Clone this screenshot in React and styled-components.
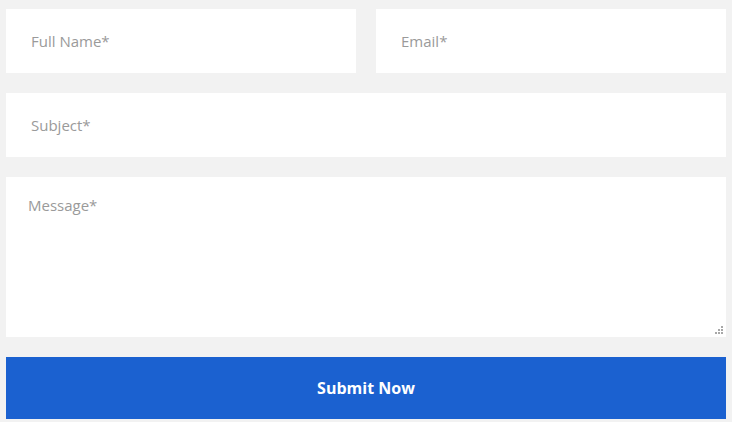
import React from 'react'
import styled, { createGlobalStyle } from 'styled-components'

const Global = createGlobalStyle`
  html, body {
    margin: 0;
    padding: 0;
    background: #f2f2f2;
  }
  * { box-sizing: border-box; }
`

const Form = styled.form`
  display: flex;
  flex-direction: column;
  gap: 20px;
  padding: 9px 6px 0 6px;
  font-family: "Open Sans", "Noto Sans", sans-serif;
`

const Row = styled.div`
  display: grid;
  grid-template-columns: 1fr 1fr;
  gap: 20px;
`

const Field = styled.input`
  display: block;
  width: 100%;
  height: 64px;
  border: none;
  outline: none;
  background: #fff;
  padding: 0 25px;
  font-family: inherit;
  font-size: 15px;
  color: #333;

  &::placeholder {
    color: #9a9a9a;
  }
`

const AreaWrap = styled.div`
  position: relative;
`

const Area = styled.textarea`
  display: block;
  width: 100%;
  height: 160px;
  border: none;
  outline: none;
  resize: none;
  background: #fff;
  padding: 18px 22px;
  font-family: inherit;
  font-size: 15px;
  color: #333;

  &::placeholder {
    color: #9a9a9a;
  }
`

const Grip = styled.svg`
  position: absolute;
  right: 3px;
  bottom: 3px;
  pointer-events: none;
`

const Submit = styled.button`
  display: block;
  width: 100%;
  height: 62px;
  border: none;
  background: #1b61d0;
  color: #fff;
  font-family: inherit;
  font-size: 16px;
  font-weight: 700;
  cursor: pointer;
`

export default function App() {
  return (
    <>
      <Global />
      <Form onSubmit={e => e.preventDefault()}>
        <Row>
          <Field placeholder="Full Name*" />
          <Field placeholder="Email*" />
        </Row>
        <Field placeholder="Subject*" />
        <AreaWrap>
          <Area placeholder="Message*" />
          <Grip width="8" height="8" viewBox="0 0 8 8" fill="#a8a8a8">
            <rect x="6" y="0" width="2" height="2" />
            <rect x="3" y="3" width="2" height="2" />
            <rect x="6" y="3" width="2" height="2" />
            <rect x="0" y="6" width="2" height="2" />
            <rect x="3" y="6" width="2" height="2" />
            <rect x="6" y="6" width="2" height="2" />
          </Grip>
        </AreaWrap>
        <Submit type="submit">Submit Now</Submit>
      </Form>
    </>
  )
}
